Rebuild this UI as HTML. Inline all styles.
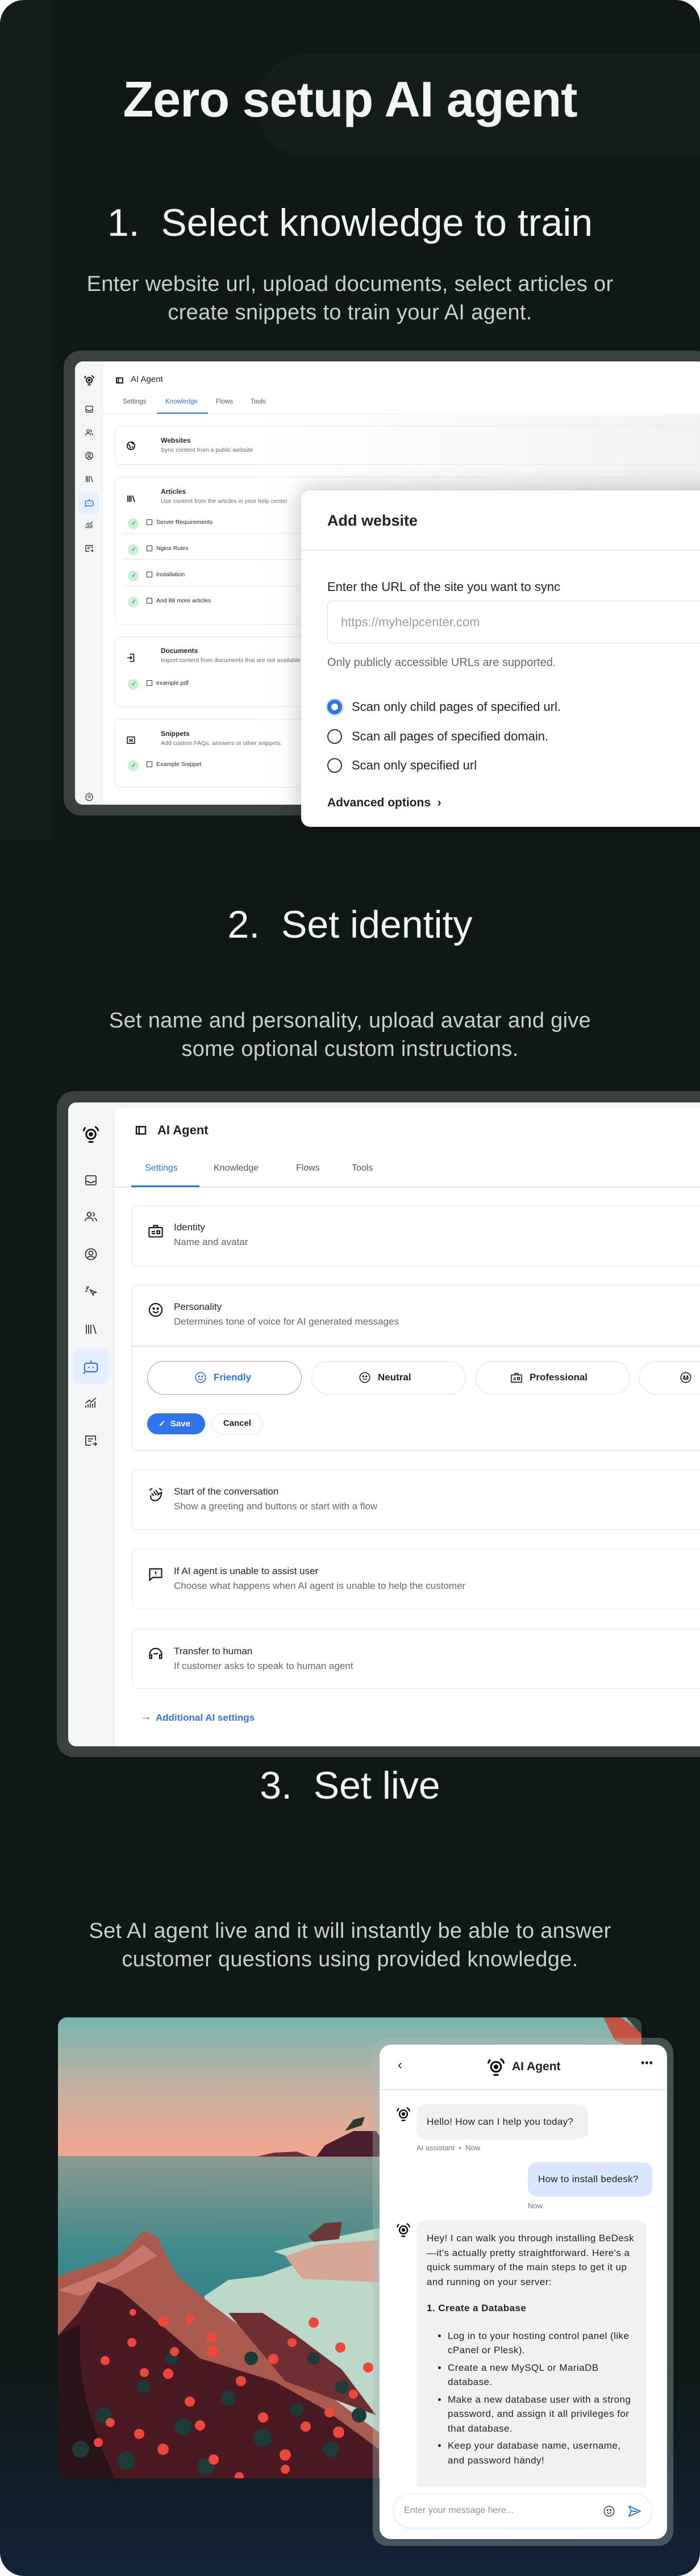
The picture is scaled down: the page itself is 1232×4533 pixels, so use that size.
<!DOCTYPE html>
<html><head><meta charset="utf-8">
<style>
*{box-sizing:border-box;margin:0;padding:0}
body{width:1232px;height:4533px;background:#fff;font-family:"Liberation Sans",sans-serif;overflow:hidden}
#page{position:absolute;left:0;top:0;width:1232px;height:4533px;border-radius:42px;overflow:hidden;background:linear-gradient(180deg,#0e1816 0%,#0e1816 92%,#111f2c 97%,#12223a 100%)}
.abs{position:absolute}
.h{position:absolute;left:0;width:1232px;text-align:center;color:#f3f5f4}
.p{position:absolute;left:0;width:1232px;text-align:center;color:#c8cfcc;font-size:38px;line-height:50px;letter-spacing:0.3px}
.ui{color:#1f2328}
.card{position:absolute;background:#fff;border:1.5px solid #e4e7ea;border-radius:9px}
svg{display:block}
.ic{position:absolute}
</style></head><body><div id="page">

<div class="abs" style="left:0;top:0;width:92px;height:1480px;background:rgba(255,255,255,0.018)"></div>
<div class="abs" style="left:450px;top:95px;width:900px;height:180px;border-radius:90px;background:rgba(255,255,255,0.022)"></div>

<div class="h" style="top:120px;font-size:88px;font-weight:bold;line-height:110px;letter-spacing:-1px">Zero setup AI agent</div>
<div class="h" style="top:350px;font-size:68px;line-height:84px">1.&nbsp; Select knowledge to train</div>
<div class="p" style="top:475px">Enter website url, upload documents, select articles or<br>create snippets to train your AI agent.</div>

<!-- SCREEN 1 -->
<div class="abs" style="left:112px;top:617px;width:1140px;height:818px;background:#3a4240;border-radius:30px"></div>
<div class="abs ui" style="left:132px;top:636px;width:1110px;height:780px;background:#fff;border-radius:14px;overflow:hidden">
  <div class="abs" style="left:0;top:0;width:49px;height:780px;background:#f4f5f7;border-right:1px solid #e6e8eb"></div>
  <svg class="ic" style="left:14px;top:22px" width="22" height="22" viewBox="0 0 24 24" fill="none" stroke="#111" stroke-width="2.2" stroke-linecap="round"><circle cx="12" cy="12" r="5.5"/><circle cx="12" cy="12" r="1.6" fill="#111"/><path d="M3.5 7.5 L5 4.5M20.5 7.5 C20 5.5 19 4.5 17.5 3.5M10 21h4"/></svg>
  <svg class="ic" style="left:17px;top:76px" width="16" height="16" viewBox="0 0 24 24" fill="none" stroke="#333" stroke-width="2"><rect x="3" y="4" width="18" height="16" rx="2"/><path d="M3 14h5l1 2h6l1-2h5"/></svg>
  <svg class="ic" style="left:17px;top:117px" width="16" height="16" viewBox="0 0 24 24" fill="none" stroke="#333" stroke-width="2"><circle cx="9" cy="8" r="3.5"/><path d="M2 20c0-4 3-6 7-6s7 2 7 6M15 5a3 3 0 010 6M18 14c2 1 4 3 4 6"/></svg>
  <svg class="ic" style="left:17px;top:158px" width="16" height="16" viewBox="0 0 24 24" fill="none" stroke="#333" stroke-width="2"><circle cx="12" cy="12" r="9.5"/><circle cx="12" cy="10" r="3.5"/><path d="M6 18c3-3 9-3 12 0"/></svg>
  <svg class="ic" style="left:17px;top:199px" width="16" height="16" viewBox="0 0 24 24" fill="none" stroke="#333" stroke-width="2"><path d="M4 4v16M8 4v16M12 4v16M16 4l5 16"/></svg>
  <div class="abs" style="left:6px;top:231px;width:37px;height:38px;border-radius:8px;background:#e6effd"></div>
  <svg class="ic" style="left:16px;top:240px" width="18" height="18" viewBox="0 0 24 24" fill="none" stroke="#2f74e8" stroke-width="2"><rect x="3" y="7" width="18" height="12" rx="3"/><path d="M12 3v4M9 12v2M15 12v2M3 19l-1 3"/></svg>
  <svg class="ic" style="left:17px;top:280px" width="16" height="16" viewBox="0 0 24 24" fill="none" stroke="#333" stroke-width="2"><path d="M3 20v-4M7 20v-6M11 20v-8M15 20v-7M19 20v-11M3 12l6-5 4 3 8-7"/></svg>
  <svg class="ic" style="left:17px;top:321px" width="16" height="16" viewBox="0 0 24 24" fill="none" stroke="#333" stroke-width="2"><path d="M20 12V4H3v16h9M7 9h9M7 13h6M15 18h7M19 15l3 3-3 3"/></svg>
  <svg class="ic" style="left:17px;top:758px" width="16" height="16" viewBox="0 0 24 24" fill="none" stroke="#555" stroke-width="2"><circle cx="12" cy="12" r="3"/><path d="M12 2l2 3 3-1 1 3 3 1-1 3 2 2-2 2 1 3-3 1-1 3-3-1-2 3-2-3-3 1-1-3-3-1 1-3-2-2 2-2-1-3 3-1 1-3 3 1z"/></svg>

  <svg class="ic" style="left:72px;top:28px" width="13" height="11" viewBox="0 0 24 20" fill="none" stroke="#111" stroke-width="3.5"><rect x="2" y="2" width="20" height="16"/><path d="M8 2v16" /></svg>
  <div class="abs" style="left:98px;top:23px;font-size:15px">AI Agent</div>
  <div class="abs" style="left:84px;top:65px;font-size:11.5px;color:#555">Settings</div>
  <div class="abs" style="left:159px;top:65px;font-size:11.5px;color:#2f74e8">Knowledge</div>
  <div class="abs" style="left:248px;top:65px;font-size:11.5px;color:#555">Flows</div>
  <div class="abs" style="left:309px;top:65px;font-size:11.5px;color:#555">Tools</div>
  <div class="abs" style="left:49px;top:92px;width:1100px;height:1px;background:#e6e8eb"></div>
  <div class="abs" style="left:144px;top:90px;width:90px;height:2px;background:#2f74e8"></div>

  <div class="card" style="left:70px;top:113px;width:1100px;height:69px"></div>
  <svg class="ic" style="left:90px;top:140px" width="17" height="17" viewBox="0 0 24 24" fill="none" stroke="#111" stroke-width="2.4"><circle cx="12" cy="12" r="9.5"/><path d="M4 9c3 0 5 1 5 4s2 3 2 6M14 3c0 3 2 4 5 4M13 14c2 0 4 1 4 4" /></svg>
  <div class="abs" style="left:151px;top:132px;font-size:12px;font-weight:bold">Websites</div>
  <div class="abs" style="left:151px;top:150px;font-size:10.5px;color:#666">Sync content from a public website</div>

  <div class="card" style="left:70px;top:203px;width:1100px;height:260px"></div>
  <svg class="ic" style="left:90px;top:233px" width="17" height="17" viewBox="0 0 24 24" fill="none" stroke="#111" stroke-width="2.4"><path d="M4 4v16M8 4v16M12 4v16M16 4l5 16"/></svg>
  <div class="abs" style="left:151px;top:222px;font-size:12px;font-weight:bold">Articles</div>
  <div class="abs" style="left:151px;top:240px;font-size:10.5px;color:#666">Use content from the articles in your help center</div>

  <div class="abs" style="left:86px;top:302px;width:1000px;height:1px;background:#e6e8eb"></div>
  <div class="abs" style="left:86px;top:348px;width:1000px;height:1px;background:#e6e8eb"></div>
  <div class="abs" style="left:86px;top:395px;width:1000px;height:1px;background:#e6e8eb"></div>

  <div class="card" style="left:70px;top:484px;width:1100px;height:124px"></div>
  <svg class="ic" style="left:90px;top:513px" width="17" height="17" viewBox="0 0 24 24" fill="none" stroke="#111" stroke-width="2.2"><path d="M9 3h10v18H9M3 12h11M10 8l4 4-4 4"/></svg>
  <div class="abs" style="left:151px;top:502px;font-size:12px;font-weight:bold">Documents</div>
  <div class="abs" style="left:151px;top:520px;font-size:10.5px;color:#666;white-space:nowrap">Import content from documents that are not available</div>

  <div class="card" style="left:70px;top:629px;width:1100px;height:121px"></div>
  <svg class="ic" style="left:90px;top:658px" width="17" height="17" viewBox="0 0 24 24" fill="none" stroke="#111" stroke-width="2.2"><rect x="3" y="4" width="18" height="16"/><path d="M7 9l10 7M7 16l10-7"/></svg>
  <div class="abs" style="left:151px;top:648px;font-size:12px;font-weight:bold">Snippets</div>
  <div class="abs" style="left:151px;top:666px;font-size:10.5px;color:#666">Add custom FAQs, answers or other snippets.</div>

  <div class="abs" style="left:93px;top:276px;width:19px;height:19px;border-radius:50%;background:#c9f1d6"></div>
  <div class="abs" style="left:93px;top:322px;width:19px;height:19px;border-radius:50%;background:#c9f1d6"></div>
  <div class="abs" style="left:93px;top:368px;width:19px;height:19px;border-radius:50%;background:#c9f1d6"></div>
  <div class="abs" style="left:93px;top:414px;width:19px;height:19px;border-radius:50%;background:#c9f1d6"></div>
  <div class="abs" style="left:93px;top:559px;width:19px;height:19px;border-radius:50%;background:#c9f1d6"></div>
  <div class="abs" style="left:93px;top:702px;width:19px;height:19px;border-radius:50%;background:#c9f1d6"></div>
  <div class="abs" style="left:99px;top:276px;font-size:11px;color:#1b6a3a;line-height:19px">✓</div>
  <div class="abs" style="left:99px;top:322px;font-size:11px;color:#1b6a3a;line-height:19px">✓</div>
  <div class="abs" style="left:99px;top:368px;font-size:11px;color:#1b6a3a;line-height:19px">✓</div>
  <div class="abs" style="left:99px;top:414px;font-size:11px;color:#1b6a3a;line-height:19px">✓</div>
  <div class="abs" style="left:99px;top:559px;font-size:11px;color:#1b6a3a;line-height:19px">✓</div>
  <div class="abs" style="left:99px;top:702px;font-size:11px;color:#1b6a3a;line-height:19px">✓</div>
  <div class="abs" style="left:126px;top:278px;width:10px;height:10px;border:1.5px solid #333"></div>
  <div class="abs" style="left:126px;top:324px;width:10px;height:10px;border:1.5px solid #333"></div>
  <div class="abs" style="left:126px;top:370px;width:10px;height:10px;border:1.5px solid #333"></div>
  <div class="abs" style="left:126px;top:416px;width:10px;height:10px;border:1.5px solid #333"></div>
  <div class="abs" style="left:126px;top:561px;width:10px;height:10px;border:1.5px solid #333"></div>
  <div class="abs" style="left:126px;top:704px;width:10px;height:10px;border:1.5px solid #333"></div>
  <div class="abs" style="left:143px;top:277px;font-size:10.5px">Server Requirements</div>
  <div class="abs" style="left:143px;top:323px;font-size:10.5px">Nginx Rules</div>
  <div class="abs" style="left:143px;top:369px;font-size:10.5px">Installation</div>
  <div class="abs" style="left:143px;top:415px;font-size:10.5px">And 88 more articles</div>
  <div class="abs" style="left:143px;top:560px;font-size:10.5px">example.pdf</div>
  <div class="abs" style="left:143px;top:703px;font-size:10.5px">Example Snippet</div>
  <div class="abs" style="left:300px;top:95px;width:810px;height:685px;background:linear-gradient(90deg,rgba(255,255,255,0),rgba(230,232,234,0.6))"></div>
</div>

<div class="abs ui" style="left:530px;top:863px;width:740px;height:592px;background:#fff;border-radius:16px;box-shadow:0 0 40px rgba(0,0,0,0.25)">
  <div class="abs" style="left:46px;top:38px;font-size:27px;font-weight:bold;color:#222">Add website</div>
  <div class="abs" style="left:0;top:104px;width:740px;height:1.5px;background:#e4e6e9"></div>
  <div class="abs" style="left:46px;top:157px;font-size:22px;color:#222">Enter the URL of the site you want to sync</div>
  <div class="abs" style="left:46px;top:194px;width:700px;height:75px;border:1.5px solid #d8dbdf;border-radius:9px"></div>
  <div class="abs" style="left:70px;top:219px;font-size:22px;color:#9aa0a6">https://myhelpcenter.com</div>
  <div class="abs" style="left:46px;top:292px;font-size:20px;color:#666">Only publicly accessible URLs are supported.</div>
  <div class="abs" style="left:46px;top:368px;width:26px;height:26px;border-radius:50%;border:7px solid #2f74e8;box-shadow:0 0 0 3px #d6e4fb"></div>
  <div class="abs" style="left:46px;top:420px;width:26px;height:26px;border-radius:50%;border:2.5px solid #333"></div>
  <div class="abs" style="left:46px;top:471px;width:26px;height:26px;border-radius:50%;border:2.5px solid #333"></div>
  <div class="abs" style="left:89px;top:368px;font-size:22px;color:#222">Scan only child pages of specified url.</div>
  <div class="abs" style="left:89px;top:420px;font-size:22px;color:#222">Scan all pages of specified domain.</div>
  <div class="abs" style="left:89px;top:471px;font-size:22px;color:#222">Scan only specified url</div>
  <div class="abs" style="left:46px;top:538px;font-size:21px;font-weight:bold;color:#222">Advanced options&nbsp;&nbsp;›</div>
</div>

<!-- SECTION 2 -->
<div class="h" style="top:1585px;font-size:68px;line-height:84px">2.&nbsp; Set identity</div>
<div class="p" style="top:1771px">Set name and personality, upload avatar and give<br>some optional custom instructions.</div>

<div class="abs" style="left:100px;top:1920px;width:1160px;height:1172px;background:#3a4240;border-radius:30px"></div>
<div class="abs ui" style="left:120px;top:1940px;width:1130px;height:1133px;background:#f4f5f7;border-radius:14px;overflow:hidden">
  <div class="abs" style="left:80px;top:8px;width:1100px;height:1130px;background:#fff;border-left:1px solid #e4e7ea;border-top:1px solid #e4e7ea;border-radius:10px 0 0 0"></div>
  <svg class="ic" style="left:22px;top:38px" width="36" height="36" viewBox="0 0 24 24" fill="none" stroke="#111" stroke-width="2" stroke-linecap="round"><circle cx="12" cy="12" r="5.5"/><circle cx="12" cy="12" r="1.6" fill="#111"/><path d="M3.5 7.5 L5 4.5M20.5 7.5 C20 5.5 19 4.5 17.5 3.5M10 21h4"/></svg>
  <svg class="ic" style="left:28px;top:125px" width="24" height="24" viewBox="0 0 24 24" fill="none" stroke="#333" stroke-width="1.8"><rect x="3" y="4" width="18" height="16" rx="2"/><path d="M3 14h5l1 2h6l1-2h5"/></svg>
  <svg class="ic" style="left:28px;top:189px" width="24" height="24" viewBox="0 0 24 24" fill="none" stroke="#333" stroke-width="1.8"><circle cx="9" cy="8" r="3.5"/><path d="M2 20c0-4 3-6 7-6s7 2 7 6M15 5a3 3 0 010 6M18 14c2 1 4 3 4 6"/></svg>
  <svg class="ic" style="left:28px;top:255px" width="24" height="24" viewBox="0 0 24 24" fill="none" stroke="#333" stroke-width="1.8"><circle cx="12" cy="12" r="9.5"/><circle cx="12" cy="10" r="3.5"/><path d="M6 18c3-3 9-3 12 0"/></svg>
  <svg class="ic" style="left:28px;top:320px" width="24" height="24" viewBox="0 0 24 24" fill="none" stroke="#333" stroke-width="1.8"><path d="M11 10l10 4-4 1-1 4zM3 8h4M7 3l1 3M4 4l3 3M2 13l4-2"/></svg>
  <svg class="ic" style="left:28px;top:387px" width="24" height="24" viewBox="0 0 24 24" fill="none" stroke="#333" stroke-width="1.8"><path d="M4 4v16M8 4v16M12 4v16M16 4l5 16"/></svg>
  <div class="abs" style="left:8px;top:432px;width:63px;height:63px;border-radius:10px;background:#e6effd"></div>
  <svg class="ic" style="left:25px;top:450px" width="30" height="30" viewBox="0 0 24 24" fill="none" stroke="#2f74e8" stroke-width="1.8"><rect x="3" y="7" width="18" height="12" rx="3"/><path d="M12 3v4M9 12v2M15 12v2M3 19l-1 3"/></svg>
  <svg class="ic" style="left:28px;top:517px" width="24" height="24" viewBox="0 0 24 24" fill="none" stroke="#333" stroke-width="1.8"><path d="M3 20v-4M7 20v-6M11 20v-8M15 20v-7M19 20v-11M3 12l6-5 4 3 8-7"/></svg>
  <svg class="ic" style="left:28px;top:583px" width="24" height="24" viewBox="0 0 24 24" fill="none" stroke="#333" stroke-width="1.8"><path d="M20 12V4H3v16h9M7 9h9M7 13h6M15 18h7M19 15l3 3-3 3"/></svg>

  <svg class="ic" style="left:118px;top:41px" width="20" height="16" viewBox="0 0 24 20" fill="none" stroke="#111" stroke-width="3"><rect x="2" y="2" width="20" height="16"/><path d="M8 2v16"/></svg>
  <div class="abs" style="left:157px;top:36px;font-size:22px;font-weight:bold;color:#222">AI Agent</div>
  <div class="abs" style="left:135px;top:107px;font-size:16px;color:#2f74e8">Settings</div>
  <div class="abs" style="left:256px;top:107px;font-size:16px;color:#555">Knowledge</div>
  <div class="abs" style="left:401px;top:107px;font-size:16px;color:#555">Flows</div>
  <div class="abs" style="left:499px;top:107px;font-size:16px;color:#555">Tools</div>
  <div class="abs" style="left:81px;top:148px;width:1100px;height:1.5px;background:#e4e7ea"></div>
  <div class="abs" style="left:111px;top:146px;width:120px;height:2.5px;background:#2f74e8"></div>

  <div class="card" style="left:112px;top:181px;width:1100px;height:108px"></div>
  <div class="card" style="left:112px;top:321px;width:1100px;height:291px;box-shadow:0 1px 4px rgba(0,0,0,0.1)"></div>
  <div class="abs" style="left:112px;top:428px;width:1100px;height:1.5px;background:#e4e7ea"></div>
  <div class="card" style="left:112px;top:646px;width:1100px;height:106px"></div>
  <div class="card" style="left:112px;top:785px;width:1100px;height:107px"></div>
  <div class="card" style="left:112px;top:926px;width:1100px;height:106px"></div>

  <svg class="ic" style="left:140px;top:212px" width="28" height="28" viewBox="0 0 24 24" fill="none" stroke="#111" stroke-width="1.8"><rect x="2" y="7" width="20" height="14" rx="1"/><path d="M9 7V4h6v3M6 13h5M6 16h5M14 12h4v4h-4z"/></svg>
  <div class="abs" style="left:186px;top:210px;font-size:17px;color:#222">Identity</div>
  <div class="abs" style="left:186px;top:236px;font-size:17px;color:#666">Name and avatar</div>

  <svg class="ic" style="left:140px;top:351px" width="28" height="28" viewBox="0 0 24 24" fill="none" stroke="#111" stroke-width="1.8"><circle cx="12" cy="12" r="9.5"/><circle cx="9" cy="10" r="1" fill="#111"/><circle cx="15" cy="10" r="1" fill="#111"/><path d="M8 14c2 3 6 3 8 0"/></svg>
  <div class="abs" style="left:186px;top:350px;font-size:17px;color:#222">Personality</div>
  <div class="abs" style="left:186px;top:376px;font-size:17px;color:#666">Determines tone of voice for AI generated messages</div>

  <div class="abs" style="left:139px;top:455px;width:272px;height:59px;border:1.5px solid #7fa9ef;border-radius:30px;font-size:17px;font-weight:bold;color:#2f74e8"><svg class="ic" style="left:82px;top:17px" width="22" height="22" viewBox="0 0 24 24" fill="none" stroke="#2f74e8" stroke-width="1.8"><circle cx="12" cy="12" r="9.5"/><circle cx="9" cy="10" r="1" fill="#2f74e8"/><circle cx="15" cy="10" r="1" fill="#2f74e8"/><path d="M8 14c2 3 6 3 8 0"/></svg><span class="abs" style="left:116px;top:18px">Friendly</span></div>
  <div class="abs" style="left:428px;top:455px;width:272px;height:59px;border:1.5px solid #dfe2e5;border-radius:30px;font-size:17px;font-weight:bold;color:#222"><svg class="ic" style="left:82px;top:17px" width="22" height="22" viewBox="0 0 24 24" fill="none" stroke="#222" stroke-width="1.8"><circle cx="12" cy="12" r="9.5"/><circle cx="9" cy="10" r="1" fill="#222"/><circle cx="15" cy="10" r="1" fill="#222"/><path d="M8 15h8"/></svg><span class="abs" style="left:116px;top:18px">Neutral</span></div>
  <div class="abs" style="left:717px;top:455px;width:272px;height:59px;border:1.5px solid #dfe2e5;border-radius:30px;font-size:17px;font-weight:bold;color:#222"><svg class="ic" style="left:60px;top:17px" width="22" height="22" viewBox="0 0 24 24" fill="none" stroke="#222" stroke-width="1.8"><rect x="2" y="7" width="20" height="14" rx="1"/><path d="M9 7V4h6v3M6 13h5M6 16h5M14 12h4v4h-4z"/></svg><span class="abs" style="left:94px;top:18px">Professional</span></div>
  <div class="abs" style="left:1005px;top:455px;width:272px;height:59px;border:1.5px solid #dfe2e5;border-radius:30px"><svg class="ic" style="left:70px;top:17px" width="22" height="22" viewBox="0 0 24 24" fill="none" stroke="#222" stroke-width="1.8"><circle cx="12" cy="12" r="9.5"/><circle cx="9" cy="10" r="1" fill="#222"/><circle cx="15" cy="10" r="1" fill="#222"/><path d="M7 13h10c-1 4-9 4-10 0z"/></svg></div>
  <div class="abs" style="left:139px;top:547px;width:102px;height:37px;border-radius:19px;background:#2f74e8;color:#fff;font-size:15px;font-weight:bold;line-height:37px;padding-left:20px">✓&nbsp; Save</div>
  <div class="abs" style="left:252px;top:547px;width:91px;height:37px;border-radius:19px;border:1.5px solid #dfe2e5;color:#222;font-size:15px;font-weight:bold;line-height:34px;text-align:center">Cancel</div>

  <svg class="ic" style="left:140px;top:676px" width="28" height="28" viewBox="0 0 24 24" fill="none" stroke="#111" stroke-width="1.8"><path d="M5 13c-2 4 1 8 6 8 4 0 8-3 9-8l1-4-3 1-3 3M9 7l4 6M12 5l4 6M6 10l3 4M3 6c1-2 2-3 4-3M17 3c2 0 3 1 4 3"/></svg>
  <div class="abs" style="left:186px;top:675px;font-size:17px;color:#222">Start of the conversation</div>
  <div class="abs" style="left:186px;top:701px;font-size:17px;color:#666">Show a greeting and buttons or start with a flow</div>

  <svg class="ic" style="left:140px;top:816px" width="28" height="28" viewBox="0 0 24 24" fill="none" stroke="#111" stroke-width="1.8"><path d="M3 4h18v13H8l-5 4z"/><path d="M12 8v4M12 14v.5"/></svg>
  <div class="abs" style="left:186px;top:815px;font-size:17px;color:#222">If AI agent is unable to assist user</div>
  <div class="abs" style="left:186px;top:841px;font-size:17px;color:#666">Choose what happens when AI agent is unable to help the customer</div>

  <svg class="ic" style="left:140px;top:956px" width="28" height="28" viewBox="0 0 24 24" fill="none" stroke="#111" stroke-width="1.8"><path d="M3 16v-3a9 9 0 0118 0v3M3 14h3v5H3zM18 14h3v5h-3zM9 11c1 2 4 2 6 0"/></svg>
  <div class="abs" style="left:186px;top:956px;font-size:17px;color:#222">Transfer to human</div>
  <div class="abs" style="left:186px;top:982px;font-size:17px;color:#666">If customer asks to speak to human agent</div>

  <div class="abs" style="left:127px;top:1070px;font-size:20px;color:#2f74e8">→</div>
  <div class="abs" style="left:154px;top:1073px;font-size:17px;font-weight:bold;color:#2f74e8">Additional AI settings</div>
</div>

<!-- SECTION 3 -->
<div class="h" style="top:3100px;font-size:68px;line-height:84px">3.&nbsp; Set live</div>
<div class="p" style="top:3373px">Set AI agent live and it will instantly be able to answer<br>customer questions using provided knowledge.</div>

<div class="abs" style="left:102px;top:3550px;width:1027px;height:811px;border-radius:16px;overflow:hidden">
<svg width="1027" height="811" viewBox="0 0 1027 811">
<defs>
<linearGradient id="sky" x1="0" y1="0" x2="0" y2="1"><stop offset="0" stop-color="#74b7b0"/><stop offset="0.5" stop-color="#c6b0a0"/><stop offset="1" stop-color="#f4a68c"/></linearGradient>
<linearGradient id="sea" x1="0" y1="0" x2="0" y2="1"><stop offset="0" stop-color="#8a9a8e"/><stop offset="0.3" stop-color="#3f8a8c"/><stop offset="1" stop-color="#0d5d6e"/></linearGradient>
</defs>
<rect width="1027" height="245" fill="url(#sky)"/>
<rect y="244" width="1027" height="567" fill="url(#sea)"/>
<path d="M350 245 L380 238 L420 236 L445 245Z" fill="#6a3040"/>
<path d="M455 245 L470 225 L500 210 L520 200 L560 200 L580 230 L570 245Z" fill="#4a2030"/>
<path d="M505 200 l15 -20 l20 -5 l-5 15z" fill="#2c3a30"/>
<path d="M258 490 L300 462 L360 455 L430 430 L380 412 L440 396 L560 372 L620 360 L1027 330 L1027 811 L258 811Z" fill="#bcd8c8"/>
<path d="M400 420 L460 400 L564 392 L564 466 L430 460Z" fill="#d7a796"/>
<path d="M440 385 L470 362 L500 360 L495 390 L450 395Z" fill="#6b3838"/>
<path d="M0 455 L110 418 L150 376 L172 383 L210 455 L270 505 L370 580 L470 660 L565 730 L565 811 L0 811Z" fill="#a85a4c"/>
<path d="M0 480 L100 440 L150 400 L175 420 L120 450 L40 490Z" fill="#c9776a"/>
<path d="M36 520 L70 465 L110 480 L250 600 L380 640 L470 690 L565 760 L565 811 L0 811 L0 560Z" fill="#4a1a22"/>
<path d="M40 540 C30 640 60 720 100 811 L0 811 L0 560Z" fill="#2a1219"/>
<path d="M300 520 L360 520 L420 560 L500 620 L560 700 L400 640Z" fill="#6e2f33"/>
<g fill="#1d3b38">
<circle cx="80" cy="700" r="14"/><circle cx="150" cy="650" r="12"/><circle cx="220" cy="720" r="15"/><circle cx="300" cy="670" r="13"/><circle cx="360" cy="740" r="16"/><circle cx="420" cy="690" r="12"/><circle cx="480" cy="760" r="14"/><circle cx="530" cy="700" r="13"/><circle cx="120" cy="780" r="16"/><circle cx="260" cy="790" r="15"/><circle cx="40" cy="760" r="15"/><circle cx="200" cy="600" r="11"/><circle cx="340" cy="600" r="12"/><circle cx="450" cy="600" r="11"/><circle cx="500" cy="650" r="12"/>
</g>
<g fill="#f0473b">
<circle cx="130" cy="572" r="8"/><circle cx="185" cy="535" r="9"/><circle cx="232" cy="531" r="8"/><circle cx="270" cy="563" r="9"/><circle cx="205" cy="588" r="8"/><circle cx="83" cy="604" r="8"/><circle cx="152" cy="625" r="8"/><circle cx="194" cy="627" r="9"/><circle cx="272" cy="588" r="10"/><circle cx="232" cy="676" r="9"/><circle cx="322" cy="640" r="9"/><circle cx="379" cy="601" r="9"/><circle cx="250" cy="718" r="9"/><circle cx="361" cy="704" r="9"/><circle cx="92" cy="713" r="8"/><circle cx="143" cy="733" r="9"/><circle cx="185" cy="760" r="10"/><circle cx="71" cy="748" r="8"/><circle cx="274" cy="778" r="9"/><circle cx="400" cy="770" r="10"/><circle cx="436" cy="720" r="9"/><circle cx="478" cy="695" r="9"/><circle cx="494" cy="730" r="10"/><circle cx="450" cy="537" r="9"/><circle cx="412" cy="572" r="8"/><circle cx="497" cy="581" r="9"/><circle cx="520" cy="663" r="8"/><circle cx="546" cy="616" r="9"/><circle cx="132" cy="519" r="6"/><circle cx="400" cy="795" r="8"/><circle cx="319" cy="808" r="8"/>
</g>
<path d="M960 0 L990 0 L1027 25 L1027 60 L980 40Z" fill="#c85040"/>
<path d="M1000 0 L1027 0 L1027 30Z" fill="#2d4a3e"/>
</svg>
</div>

<div class="abs" style="left:656px;top:3586px;width:529px;height:894px;border-radius:26px;background:rgba(170,190,186,0.35)"></div>
<div class="abs ui" style="left:668px;top:3598px;width:506px;height:870px;background:#fff;border-radius:20px;overflow:hidden">
  <div class="abs" style="left:32px;top:22px;font-size:24px;color:#222">‹</div>
  <svg class="ic" style="left:186px;top:20px" width="38" height="38" viewBox="0 0 24 24" fill="none" stroke="#111" stroke-width="2" stroke-linecap="round"><circle cx="12" cy="12" r="5.5"/><circle cx="12" cy="12" r="1.6" fill="#111"/><path d="M3.5 7.5 L5 4.5M20.5 7.5 C20 5.5 19 4.5 17.5 3.5M10 21h4"/></svg>
  <div class="abs" style="left:233px;top:27px;font-size:21px;font-weight:bold;color:#222">AI Agent</div>
  <div class="abs" style="left:460px;top:22px;font-size:18px;font-weight:bold;color:#222;letter-spacing:1px">•••</div>
  <div class="abs" style="left:0;top:78px;width:506px;height:1.5px;background:#e6e8ea"></div>

  <svg class="ic" style="left:27px;top:107px" width="30" height="30" viewBox="0 0 24 24" fill="none" stroke="#111" stroke-width="2" stroke-linecap="round"><circle cx="12" cy="12" r="5.5"/><circle cx="12" cy="12" r="1.6" fill="#111"/><path d="M3.5 7.5 L5 4.5M20.5 7.5 C20 5.5 19 4.5 17.5 3.5M10 21h4"/></svg>
  <div class="abs" style="left:65px;top:105px;width:302px;height:62px;border-radius:16px;background:#eff1f2;font-size:17px;line-height:62px;padding-left:18px;color:#222;letter-spacing:0.3px">Hello! How can I help you today?</div>
  <div class="abs" style="left:65px;top:174px;font-size:13px;color:#777">AI assistant&nbsp; •&nbsp; Now</div>
  <div class="abs" style="left:261px;top:207px;width:219px;height:60px;border-radius:16px;background:#d9e6fb;font-size:17px;line-height:60px;padding-left:18px;color:#222;letter-spacing:0.3px">How to install bedesk?</div>
  <div class="abs" style="left:261px;top:276px;font-size:13px;color:#777">Now</div>

  <svg class="ic" style="left:27px;top:311px" width="30" height="30" viewBox="0 0 24 24" fill="none" stroke="#111" stroke-width="2" stroke-linecap="round"><circle cx="12" cy="12" r="5.5"/><circle cx="12" cy="12" r="1.6" fill="#111"/><path d="M3.5 7.5 L5 4.5M20.5 7.5 C20 5.5 19 4.5 17.5 3.5M10 21h4"/></svg>
  <div class="abs" style="left:65px;top:309px;width:405px;height:470px;border-radius:16px 16px 0 0;background:#eff1f2;font-size:17px;line-height:25.5px;color:#222;padding:19px 18px;letter-spacing:0.45px">
    Hey! I can walk you through installing BeDesk—it's actually pretty straightforward. Here's a quick summary of the main steps to get it up and running on your server:
    <div style="font-weight:bold;margin-top:21px">1. Create a Database</div>
    <ul style="margin:23px 0 0 37px;padding:0">
      <li style="margin-bottom:5px">Log in to your hosting control panel (like cPanel or Plesk).</li>
      <li style="margin-bottom:5px">Create a new MySQL or MariaDB database.</li>
      <li style="margin-bottom:5px">Make a new database user with a strong password, and assign it all privileges for that database.</li>
      <li>Keep your database name, username, and password handy!</li>
    </ul>
  </div>
  <div class="abs" style="left:0;top:779px;width:506px;height:91px;background:#fff"></div>
  <div class="abs" style="left:24px;top:790px;width:456px;height:61px;border-radius:31px;border:1.5px solid #e3e6e9;box-shadow:0 2px 6px rgba(0,0,0,0.06)"></div>
  <div class="abs" style="left:43px;top:811px;font-size:16px;color:#8a9096">Enter your message here...</div>
  <svg class="ic" style="left:393px;top:810px" width="22" height="22" viewBox="0 0 24 24" fill="none" stroke="#444" stroke-width="1.8"><circle cx="12" cy="12" r="9.5"/><circle cx="9" cy="10" r="1" fill="#444"/><circle cx="15" cy="10" r="1" fill="#444"/><path d="M8 14c2 3 6 3 8 0"/></svg>
  <svg class="ic" style="left:437px;top:810px" width="24" height="22" viewBox="0 0 24 22" fill="none" stroke="#2f74e8" stroke-width="2" stroke-linejoin="round"><path d="M2 2l20 9-20 9 4-9z M6 11h10"/></svg>
</div>

</div></body></html>
